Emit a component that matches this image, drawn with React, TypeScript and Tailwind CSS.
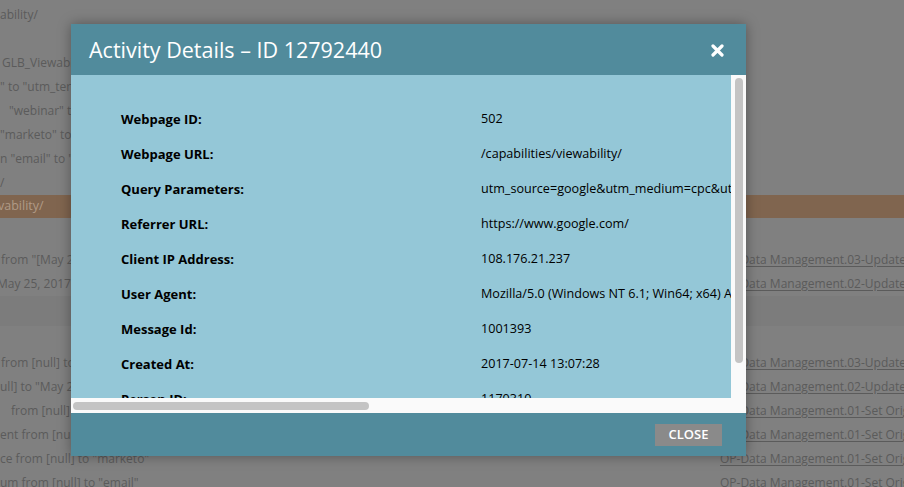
import React from "react";

const font = { fontFamily: '"Open Sans", "Liberation Sans", sans-serif' };

type BgRow = { left: string; lx: number; right?: string };

const group1: BgRow[] = [
  { left: "ability/", lx: 0 },
  { left: "", lx: 0 },
  { left: "GLB_Viewabil", lx: 2 },
  { left: "\" to \"utm_ter", lx: 0 },
  { left: "\"webinar\" to", lx: 9 },
  { left: "\"marketo\" to", lx: 0 },
  { left: "n \"email\" to \"u", lx: 0 },
  { left: "/", lx: 0 },
];

const group2: BgRow[] = [
  { left: "from \"[May 2", lx: 1, right: "OP-Data Management.03-Update Orig" },
  { left: "May 25, 2017:", lx: -3, right: "OP-Data Management.02-Update Orig" },
];

const group3: BgRow[] = [
  { left: "from [null] to", lx: 1, right: "OP-Data Management.03-Update Orig" },
  { left: "ull] to \"May 2", lx: 0, right: "OP-Data Management.02-Update Orig" },
  { left: "from [null] to", lx: 11, right: "OP-Data Management.01-Set Original" },
  { left: "ent from [null]", lx: 0, right: "OP-Data Management.01-Set Original" },
  { left: "ce from [null] to \"marketo\"", lx: 0, right: "OP-Data Management.01-Set Original" },
  { left: "um from [null] to \"email\"", lx: 0, right: "OP-Data Management.01-Set Original" },
];

function Row({ r }: { r: BgRow }) {
  return (
    <div className="flex h-[24px] items-center text-[12px] text-[#5b5b5b] whitespace-nowrap">
      <div className="w-[720px] overflow-hidden shrink-0">
        <span className="inline-block" style={{ marginLeft: r.lx }}>
          {r.left}
        </span>
      </div>
      {r.right && <span className="underline underline-offset-2">{r.right}</span>}
    </div>
  );
}

const details: [string, string][] = [
  ["Webpage ID:", "502"],
  ["Webpage URL:", "/capabilities/viewability/"],
  ["Query Parameters:", "utm_source=google&utm_medium=cpc&utm_campaign"],
  ["Referrer URL:", "https://www.google.com/"],
  ["Client IP Address:", "108.176.21.237"],
  ["User Agent:", "Mozilla/5.0 (Windows NT 6.1; Win64; x64) AppleWebKit"],
  ["Message Id:", "1001393"],
  ["Created At:", "2017-07-14 13:07:28"],
  ["Person ID:", "1170310"],
];

export default function App() {
  return (
    <div className="relative w-[904px] h-[487px] overflow-hidden bg-[#808080]" style={font}>
      {/* background page (dimmed) */}
      <div className="flex flex-col pt-[3px]">
        {group1.map((r, i) => (
          <Row key={"a" + i} r={r} />
        ))}
        <div className="flex h-[23px] items-center bg-[#80654f] text-[12.5px] text-[#b09a86] whitespace-nowrap">
          <span className="ml-[-2px]">vability/</span>
        </div>
        <div className="h-[30px]" />
        {group2.map((r, i) => (
          <Row key={"b" + i} r={r} />
        ))}
        <div className="h-[30px] bg-[#7c7c7c]" />
        <div className="h-[25px]" />
        {group3.map((r, i) => (
          <Row key={"c" + i} r={r} />
        ))}
      </div>

      {/* modal */}
      <div className="absolute left-[71px] top-[24px] w-[675px] h-[432px] flex flex-col shadow-[0_0_12px_rgba(0,0,0,0.35)]">
        <div className="h-[51px] shrink-0 bg-[#518b9c] flex items-center justify-between pl-[18px] pr-[22px]">
          <span className="text-white text-[21.5px] font-normal leading-none">
            Activity Details – ID 12792440
          </span>
          <svg width="13" height="13" viewBox="0 0 13 13" className="mt-[1px]">
            <path d="M2 2 L11 11 M11 2 L2 11" stroke="white" strokeWidth="3.2" strokeLinecap="round" />
          </svg>
        </div>
        <div className="h-[338px] shrink-0 flex flex-col bg-white">
          <div className="flex h-[323px]">
            <div className="w-[660px] h-full bg-[#94c7d7] overflow-hidden pt-[27px] pl-[50px]">
              {details.map(([k, v]) => (
                <div key={k} className="flex h-[35px] items-center text-black whitespace-nowrap">
                  <span className="w-[360px] shrink-0 font-bold text-[13px]">{k}</span>
                  <span className="text-[12.6px]">{v}</span>
                </div>
              ))}
            </div>
            <div className="w-[15px] h-full bg-[#fafafa] pt-[3px] flex justify-center">
              <div className="w-[8px] h-[285px] rounded-full bg-[#c4c4c4]" />
            </div>
          </div>
          <div className="h-[15px] bg-[#fafafa] flex items-center pl-[2px]">
            <div className="w-[296px] h-[8px] rounded-full bg-[#c4c4c4]" />
          </div>
        </div>
        <div className="flex-1 bg-[#518b9c] flex items-center justify-end pr-[24px]">
          <button className="w-[67px] h-[22px] bg-[#8a8a8a] text-white text-[13px] font-semibold flex items-center justify-center">
            CLOSE
          </button>
        </div>
      </div>
    </div>
  );
}
